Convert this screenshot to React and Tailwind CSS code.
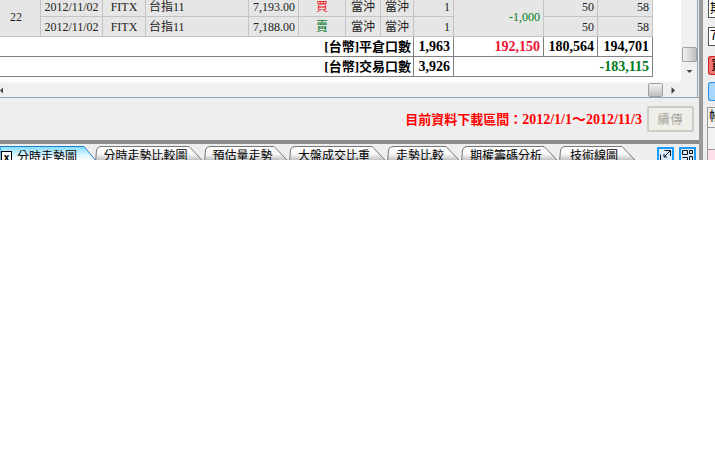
const F = '"Liberation Serif","Noto Sans CJK TC",serif';
const cjk = '"Noto Sans CJK TC",serif';
function Tab({ label, w }) {
  return (
    <div className="relative h-[14px] mt-[2px] flex items-start justify-center overflow-hidden text-[12px] leading-[14px] text-black" style={{ width: w, fontFamily: cjk }}>
      <svg className="absolute inset-0" width={w} height="16"><defs><linearGradient id="tg" x1="0" x2="0" y1="0" y2="1"><stop offset="0" stopColor="#fff" /><stop offset="0.5" stopColor="#f6f6f6" /><stop offset="1" stopColor="#b0b0b0" /></linearGradient></defs><path d={`M0.5 16 L1.5 4 Q2.5 0.5 6 0.5 L${w - 15} 0.5 L${w} 16 Z`} fill="url(#tg)" stroke="#777" /></svg>
      <span className="relative pr-[8px] pt-[2px]">{label}</span>
    </div>
  );
}
const c = "border-r border-b border-[#c4c4c4] text-[12px] leading-none whitespace-nowrap pt-[1px]";
const t = "border-r border-b border-[#808080] bg-white text-[14px] font-bold leading-none pr-[3px] text-right whitespace-nowrap";
const label = "border-r border-b border-[#808080] bg-white text-[13px] font-bold text-black leading-none pr-[2px] text-right whitespace-nowrap";
function Row({ side, color, price }) {
  return (
    <>
      <td className={c + " px-[3px] text-center"}>2012/11/02</td>
      <td className={c + " text-center"}>FITX</td>
      <td className={c + " pl-[3px]"}>台指11</td>
      <td className={c + " pr-[3px] text-right"}>{price}</td>
      <td className={c + " text-center"} style={{ color }}>{side}</td>
      <td className={c + " text-center"}>當沖</td>
      <td className={c + " text-center"}>當沖</td>
      <td className={c + " pr-[3px] text-right"}>1</td>
    </>
  );
}
function Arrow({ d }) {
  return <svg width="7" height="7" viewBox="0 0 7 7"><path d={d} fill="#444" /></svg>;
}
export default function App() {
  return (
    <div className="w-[715px] h-[460px] bg-white overflow-hidden" style={{ fontFamily: F }}>
      <div className="h-[160px] flex overflow-hidden bg-[#eeeeee]">
        <div className="w-[699px] shrink-0 flex flex-col">
          <div className="h-[97px] shrink-0 flex border-b border-[#8fa3b8] box-content">
            <div className="w-[681px] flex flex-col">
              <div className="h-[81px] bg-white overflow-hidden">
                <table className="table-fixed w-[653px] -mt-[3px] text-[#222]" style={{ borderCollapse: "separate", borderSpacing: 0 }}>
                  <colgroup>
                    {[41, 62, 43, 103, 50, 47, 35, 33, 40, 90, 54, 55].map((w, i) => <col key={i} style={{ width: w }} />)}
                  </colgroup>
                  <tbody className="bg-[#e6e6e6]">
                    <tr className="h-[20px]">
                      <td rowSpan={2} className={c + " text-center pr-[8px]"}>22</td>
                      <Row side="買" color="#ee1111" price="7,193.00" />
                      <td rowSpan={2} className={c + " text-right pr-[3px] text-[#007a1e]"}>-1,000</td>
                      <td className={c + " text-right pr-[3px]"}>50</td>
                      <td className={c + " text-right pr-[3px]"}>58</td>
                    </tr>
                    <tr className="h-[20px]">
                      <Row side="賣" color="#007a1e" price="7,188.00" />
                      <td className={c + " text-right pr-[3px]"}>50</td>
                      <td className={c + " text-right pr-[3px]"}>58</td>
                    </tr>
                    <tr className="h-[20px]">
                      <td colSpan={8} className={label}>[台幣]平倉口數</td>
                      <td className={t + " text-black"}>1,963</td>
                      <td className={t + " text-[#ee1133]"}>192,150</td>
                      <td className={t + " text-black"}>180,564</td>
                      <td className={t + " text-black"}>194,701</td>
                    </tr>
                    <tr className="h-[20px]">
                      <td colSpan={8} className={label}>[台幣]交易口數</td>
                      <td className={t + " text-black"}>3,926</td>
                      <td colSpan={3} className={t + " text-[#007a1e]"}>-183,115</td>
                    </tr>
                  </tbody>
                </table>
              </div>
              <div className="h-[16px] flex items-center justify-between bg-[#f0f0f0] border-t-2 border-[#f8f8f8]">
                <Arrow d="M0 3.5 L3 0.5 V6.5 Z" />
                <div className="flex items-center">
                  <div className="w-[15px] h-[14px] rounded-[2px] border border-[#a0a0a0] bg-gradient-to-b from-[#f2f2f2] to-[#c0c0c0]" />
                  <div className="w-[18px] flex justify-center"><Arrow d="M6 3.5 L2.5 0 V7 Z" /></div>
                </div>
              </div>
            </div>
            <div className="w-[17px] bg-[#f0f0f0] border-r border-[#8fa3b8] flex flex-col justify-end items-center pb-[16px]">
              <div className="w-[15px] h-[15px] rounded-[2px] border border-[#a0a0a0] bg-gradient-to-r from-[#f2f2f2] to-[#c0c0c0]" />
              <div className="h-[19px] flex items-center"><Arrow d="M0.5 2 H6.5 L3.5 5 Z" /></div>
            </div>
          </div>
          <div className="h-[42px] shrink-0 flex items-center justify-end pr-[5px] gap-[5px]">
            <span className="text-[14px] font-bold text-[#ff0000] whitespace-nowrap"><span className="text-[13px]">目前資料下載區間：</span>2012/1/1～2012/11/3</span>
            <div className="w-[47px] h-[26px] flex items-center justify-center rounded-[2px] border-2 border-[#cdcdc8] bg-[#efefea] text-[12px] tracking-[1px] text-[#a6a6a0]" style={{ fontFamily: cjk }}>續傳</div>
          </div>
          <div className="h-[4px] shrink-0 bg-[#8c8c8c]" />
          <div className="flex-1 bg-[#eeeeee] flex items-start">
            <div className="relative w-[95px] h-[14px] mt-[2px] overflow-hidden shrink-0 text-[12px] leading-[14px]" style={{ fontFamily: cjk }}>
              <svg className="absolute inset-0" width="96" height="16"><defs><linearGradient id="ta" x1="0" x2="0" y1="0" y2="1"><stop offset="0" stopColor="#7fdcff" /><stop offset="0.6" stopColor="#dff6ff" /><stop offset="1" stopColor="#fff" /></linearGradient></defs><path d="M0 0.5 H84 L96 15 H0 Z" fill="url(#ta)" stroke="#1c7fd0" /></svg>
              <div className="relative flex items-start pl-[1px] gap-[5px] text-black">
                <span className="w-[11px] h-[11px] mt-[5px] border border-black bg-white flex items-center justify-center text-[10px] font-bold leading-none">x</span>
                <span className="mt-[3px]">分時走勢圖</span>
              </div>
            </div>
            <Tab label="分時走勢比較圖" w={109} />
            <Tab label="預估量走勢" w={85} />
            <Tab label="大盤成交比重" w={98} />
            <Tab label="走勢比較" w={74} />
            <Tab label="期權籌碼分析" w={98} />
            <Tab label="技術線圖" w={78} />
            <div className="flex-1 flex justify-end gap-[5px] pr-[3px] pt-[3px]">
              {[0, 1].map((i) => (
                <div key={i} className="w-[17px] h-[13px] border-2 border-b-0 border-[#1a9cff] bg-[#d8ecfb] flex justify-center items-start">
                  <svg width="13" height="13" viewBox="0 0 13 13" fill="none" stroke="#111" className="shrink-0">
                    {i === 0 ? <path d="M1.5 5.5 V12 H8 M5.5 1.5 H11.5 V7 M11 2 L5 8 M5 5 V8 H8" /> : <path d="M1.5 1.5 H6.5 V5.5 H1.5 Z M8.5 1.5 H11.5 V4.5 H8.5 Z M8.5 7.5 H11.5 V12 H8.5 Z M1.5 8.5 H6.5 V12" />}
                  </svg>
                </div>
              ))}
            </div>
          </div>
        </div>
        <div className="w-[4px] shrink-0 bg-[#9a9a9a]" />
        <div className="flex-1 flex flex-col pl-[5px] text-[13px] leading-none text-black" style={{ fontFamily: cjk }}>
          <div className="h-[18px] bg-white border-l border-b border-[#555] overflow-hidden pl-[1px]">期</div>
          <div className="h-[19px] mt-[9px] bg-white border-l border-t border-b border-[#555] overflow-hidden pl-[1px]">7</div>
          <div className="h-[19px] mt-[10px] rounded-l-[3px] border border-r-0 border-[#cc2222] bg-[#f07878] pl-[2px] overflow-hidden">買</div>
          <div className="h-[19px] mt-[7px] rounded-l-[3px] border border-r-0 border-[#2a8ee8] bg-[#a8d8ff]" />
          <div className="h-[21px] -ml-[1px] mt-[6px] bg-[#f2f2f2] border border-r-0 border-[#999] pl-[1px] overflow-hidden">帳</div>
          <div className="h-[21px] -ml-[1px] bg-[#f2f2f2] border-l border-[#999]" />
          <div className="flex-1 -ml-[1px] bg-[#fde0ec] border-l border-t border-[#999]" />
        </div>
      </div>
    </div>
  );
}
